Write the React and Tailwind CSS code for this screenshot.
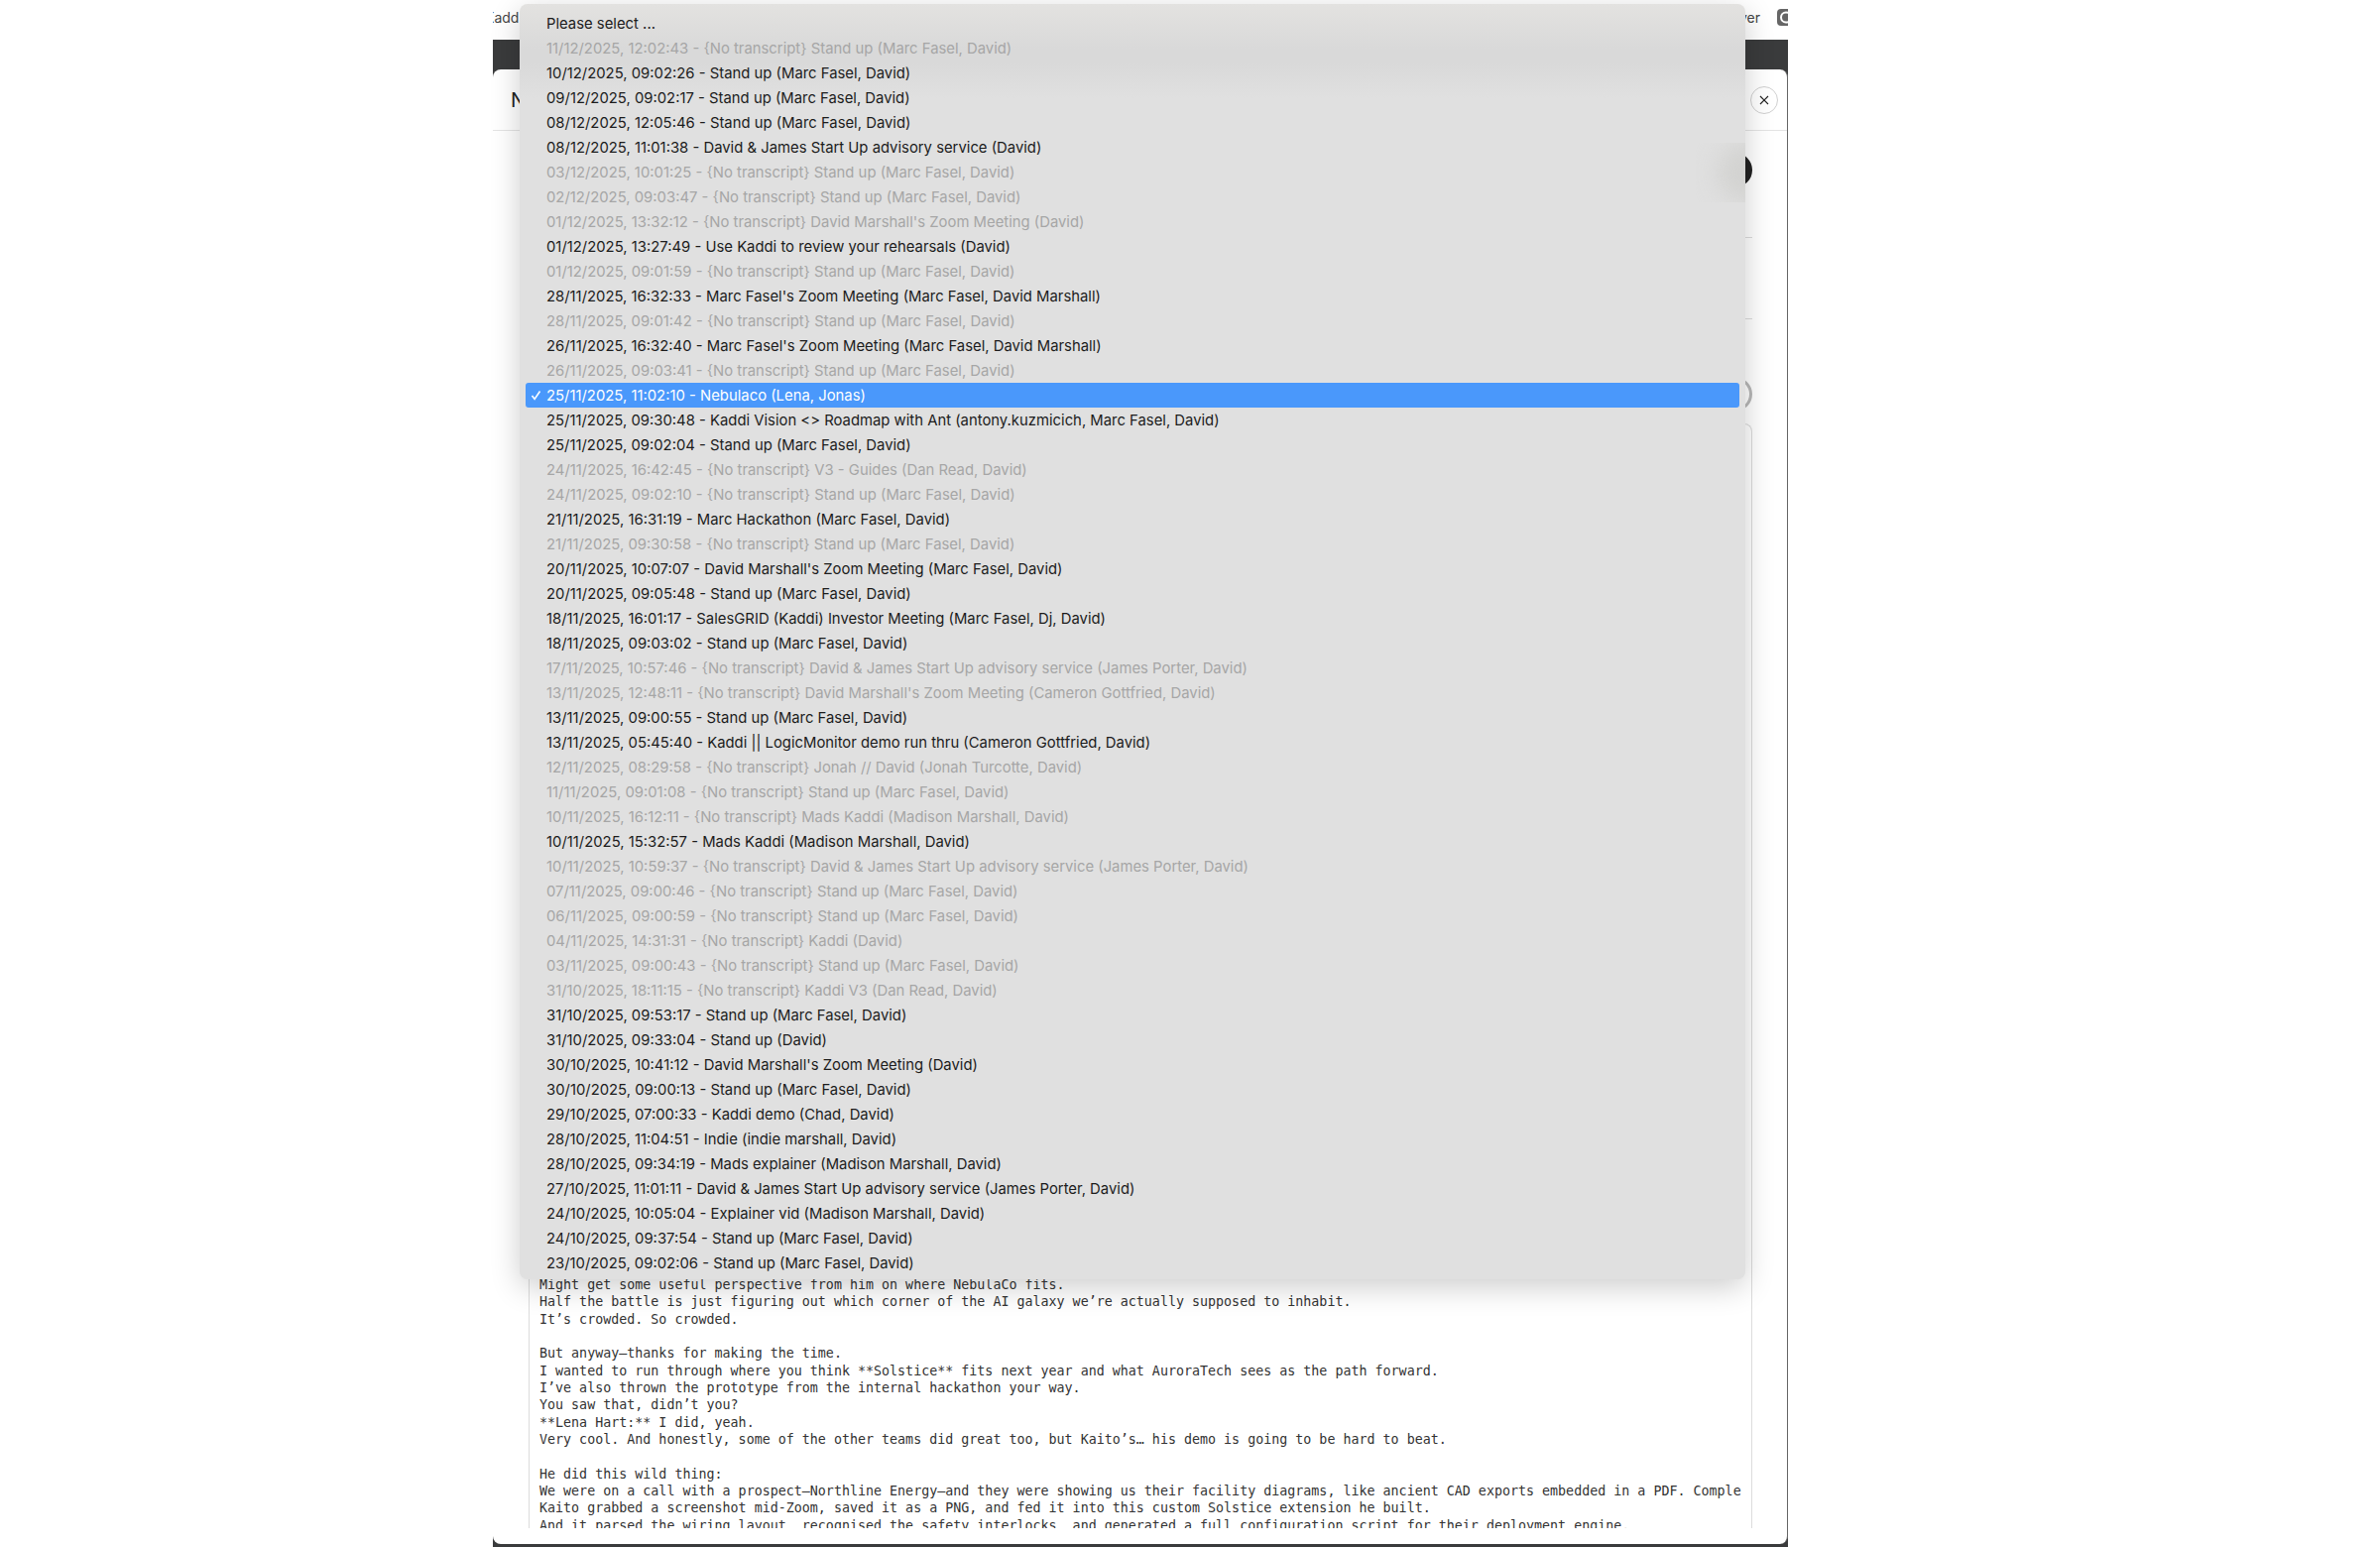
import React from "react";

const rows = [
  [0, "Please select ..."],
  [1, "11/12/2025, 12:02:43 - {No transcript} Stand up (Marc Fasel, David)"],
  [0, "10/12/2025, 09:02:26 - Stand up (Marc Fasel, David)"],
  [0, "09/12/2025, 09:02:17 - Stand up (Marc Fasel, David)"],
  [0, "08/12/2025, 12:05:46 - Stand up (Marc Fasel, David)"],
  [0, "08/12/2025, 11:01:38 - David & James Start Up advisory service (David)"],
  [1, "03/12/2025, 10:01:25 - {No transcript} Stand up (Marc Fasel, David)"],
  [1, "02/12/2025, 09:03:47 - {No transcript} Stand up (Marc Fasel, David)"],
  [1, "01/12/2025, 13:32:12 - {No transcript} David Marshall's Zoom Meeting (David)"],
  [0, "01/12/2025, 13:27:49 - Use Kaddi to review your rehearsals (David)"],
  [1, "01/12/2025, 09:01:59 - {No transcript} Stand up (Marc Fasel, David)"],
  [0, "28/11/2025, 16:32:33 - Marc Fasel's Zoom Meeting (Marc Fasel, David Marshall)"],
  [1, "28/11/2025, 09:01:42 - {No transcript} Stand up (Marc Fasel, David)"],
  [0, "26/11/2025, 16:32:40 - Marc Fasel's Zoom Meeting (Marc Fasel, David Marshall)"],
  [1, "26/11/2025, 09:03:41 - {No transcript} Stand up (Marc Fasel, David)"],
  [2, "25/11/2025, 11:02:10 - Nebulaco (Lena, Jonas)"],
  [0, "25/11/2025, 09:30:48 - Kaddi Vision <> Roadmap with Ant (antony.kuzmicich, Marc Fasel, David)"],
  [0, "25/11/2025, 09:02:04 - Stand up (Marc Fasel, David)"],
  [1, "24/11/2025, 16:42:45 - {No transcript} V3 - Guides (Dan Read, David)"],
  [1, "24/11/2025, 09:02:10 - {No transcript} Stand up (Marc Fasel, David)"],
  [0, "21/11/2025, 16:31:19 - Marc Hackathon (Marc Fasel, David)"],
  [1, "21/11/2025, 09:30:58 - {No transcript} Stand up (Marc Fasel, David)"],
  [0, "20/11/2025, 10:07:07 - David Marshall's Zoom Meeting (Marc Fasel, David)"],
  [0, "20/11/2025, 09:05:48 - Stand up (Marc Fasel, David)"],
  [0, "18/11/2025, 16:01:17 - SalesGRID (Kaddi) Investor Meeting (Marc Fasel, Dj, David)"],
  [0, "18/11/2025, 09:03:02 - Stand up (Marc Fasel, David)"],
  [1, "17/11/2025, 10:57:46 - {No transcript} David & James Start Up advisory service (James Porter, David)"],
  [1, "13/11/2025, 12:48:11 - {No transcript} David Marshall's Zoom Meeting (Cameron Gottfried, David)"],
  [0, "13/11/2025, 09:00:55 - Stand up (Marc Fasel, David)"],
  [0, "13/11/2025, 05:45:40 - Kaddi || LogicMonitor demo run thru (Cameron Gottfried, David)"],
  [1, "12/11/2025, 08:29:58 - {No transcript} Jonah // David (Jonah Turcotte, David)"],
  [1, "11/11/2025, 09:01:08 - {No transcript} Stand up (Marc Fasel, David)"],
  [1, "10/11/2025, 16:12:11 - {No transcript} Mads Kaddi (Madison Marshall, David)"],
  [0, "10/11/2025, 15:32:57 - Mads Kaddi (Madison Marshall, David)"],
  [1, "10/11/2025, 10:59:37 - {No transcript} David & James Start Up advisory service (James Porter, David)"],
  [1, "07/11/2025, 09:00:46 - {No transcript} Stand up (Marc Fasel, David)"],
  [1, "06/11/2025, 09:00:59 - {No transcript} Stand up (Marc Fasel, David)"],
  [1, "04/11/2025, 14:31:31 - {No transcript} Kaddi (David)"],
  [1, "03/11/2025, 09:00:43 - {No transcript} Stand up (Marc Fasel, David)"],
  [1, "31/10/2025, 18:11:15 - {No transcript} Kaddi V3 (Dan Read, David)"],
  [0, "31/10/2025, 09:53:17 - Stand up (Marc Fasel, David)"],
  [0, "31/10/2025, 09:33:04 - Stand up (David)"],
  [0, "30/10/2025, 10:41:12 - David Marshall's Zoom Meeting (David)"],
  [0, "30/10/2025, 09:00:13 - Stand up (Marc Fasel, David)"],
  [0, "29/10/2025, 07:00:33 - Kaddi demo (Chad, David)"],
  [0, "28/10/2025, 11:04:51 - Indie (indie marshall, David)"],
  [0, "28/10/2025, 09:34:19 - Mads explainer (Madison Marshall, David)"],
  [0, "27/10/2025, 11:01:11 - David & James Start Up advisory service (James Porter, David)"],
  [0, "24/10/2025, 10:05:04 - Explainer vid (Madison Marshall, David)"],
  [0, "24/10/2025, 09:37:54 - Stand up (Marc Fasel, David)"],
  [0, "23/10/2025, 09:02:06 - Stand up (Marc Fasel, David)"],
];

const transcript = [
  "Might get some useful perspective from him on where NebulaCo fits.",
  "Half the battle is just figuring out which corner of the AI galaxy we’re actually supposed to inhabit.",
  "It’s crowded. So crowded.",
  "",
  "But anyway—thanks for making the time.",
  "I wanted to run through where you think **Solstice** fits next year and what AuroraTech sees as the path forward.",
  "I’ve also thrown the prototype from the internal hackathon your way.",
  "You saw that, didn’t you?",
  "**Lena Hart:** I did, yeah.",
  "Very cool. And honestly, some of the other teams did great too, but Kaito’s… his demo is going to be hard to beat.",
  "",
  "He did this wild thing:",
  "We were on a call with a prospect—Northline Energy—and they were showing us their facility diagrams, like ancient CAD exports embedded in a PDF. Comple",
  "Kaito grabbed a screenshot mid-Zoom, saved it as a PNG, and fed it into this custom Solstice extension he built.",
  "And it parsed the wiring layout, recognised the safety interlocks, and generated a full configuration script for their deployment engine.",
];

const Row = ({ kind, text }) => {
  if (kind === 2) {
    return (
      <div className="relative h-[25px] rounded-[3px] bg-[#4a98fb] pl-[21px] leading-[26px] text-white">
        <svg className="absolute left-[5px] top-[7px]" width="11" height="11" viewBox="0 0 11 11" fill="none" stroke="currentColor" strokeWidth="1.6">
          <path d="M1.5 6l2.6 3.4L9.5 1.5" />
        </svg>
        {text}
      </div>
    );
  }
  return (
    <div
      className={`h-[25px] pl-[21px] leading-[26px] ${
        kind === 1 ? "text-[#a6a6a6]" : "text-[#1c1c1c]"
      }`}
    >
      {text}
    </div>
  );
};

export default function App() {
  return (
    <div className="relative h-[1560px] w-[2400px] overflow-hidden bg-white font-['Inter',sans-serif]">
      {/* app window behind the menu */}
      <div className="ml-[497px] flex h-[1560px] w-[1306px] flex-col overflow-hidden">
        <div className="flex h-[40px] items-start justify-between pt-[7px] text-[14px] text-[#444]">
          <span className="-ml-[8px]">Kadd</span>
          <div className="-mr-[7px] flex items-center gap-[17px]">
            <span>ver</span>
            <svg width="18" height="17" viewBox="0 0 18 17" fill="none">
              <rect width="18" height="17" rx="4" fill="#666" />
              <circle cx="9" cy="8.5" r="5" stroke="#fff" strokeWidth="2" />
            </svg>
          </div>
        </div>
        <div className="flex flex-1 flex-col bg-[#3a3b3c] pb-[3px]">
          <div className="mt-[30px] flex min-h-0 flex-1 flex-col rounded-[8px] border-r border-[#666] bg-white">
            <div className="flex h-[62px] shrink-0 items-center justify-between border-b border-[#e4e4e4] pl-[18px] pr-[9px]">
              <span className="text-[20px] text-[#222]">N</span>
              <div className="flex h-[28px] w-[28px] items-center justify-center rounded-full border border-[#d0d0d0] text-[#222]">
                <svg width="12" height="12" viewBox="0 0 12 12" fill="none" stroke="currentColor" strokeWidth="1.2">
                  <path d="M2 2l8 8M10 2l-8 8" />
                </svg>
              </div>
            </div>
            <div className="flex min-h-0 flex-1 flex-col pl-[36px] pr-[35px]">
              <div className="flex h-[108px] shrink-0 justify-end border-b border-[#dcdcdc] pt-[22px]">
                <div className="h-[35px] w-[35px] rounded-full bg-[#222]" />
              </div>
              <div className="h-[82px] shrink-0 border-b border-[#dcdcdc]" />
              <div className="mt-[58px] h-[35px] shrink-0 rounded-full border-[3px] border-[#b8b8b8]" />
              <div className="mt-[12px] mb-[16px] flex min-h-0 flex-1 flex-col justify-end overflow-hidden rounded-t-[8px] border-x border-t border-[#dcdcdc] pl-[10px]">
                <pre className="-mb-[6px] font-['DejaVu_Sans_Mono',monospace] text-[13.33px] leading-[17.35px] text-[#333]">
                  {transcript.join("\n")}
                </pre>
              </div>
            </div>
          </div>
        </div>
      </div>

      {/* native select menu */}
      <div className="absolute left-[524px] top-[4px] w-[1236px] rounded-[8px] bg-[#e0e0e0] bg-[linear-gradient(180deg,#e3e2e0_0px,#d9d9d9_45px,#d9d9d9_60px,#e0e0e0_95px)] px-[6px] pt-[7px] pb-[4px] text-[14.85px] shadow-[0_8px_30px_rgba(0,0,0,0.2)]">
        {/* dark button blurred through the translucent menu */}
        <div className="absolute right-0 top-[140px] h-[60px] w-[50px] overflow-hidden">
          <div className="ml-[22px] h-[60px] w-[60px] rounded-full bg-[#d2d2d0] blur-md" />
        </div>
        <div className="relative">
          {rows.map(([kind, text]) => (
            <Row key={text} kind={kind} text={text} />
          ))}
        </div>
      </div>
    </div>
  );
}
